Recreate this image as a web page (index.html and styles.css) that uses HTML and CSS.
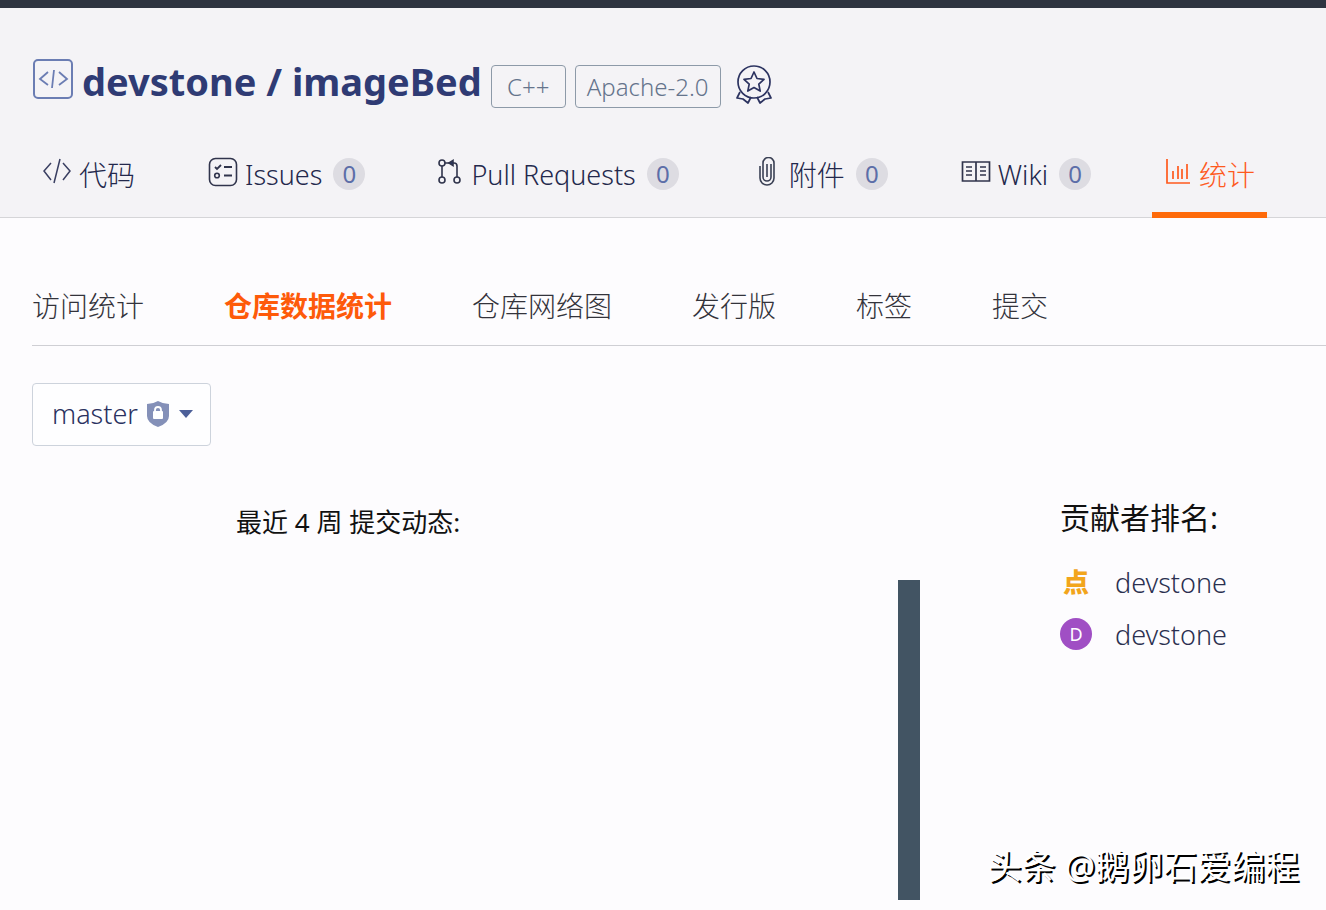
FILE: index.html
```html
<!DOCTYPE html>
<html lang="zh-CN">
<head>
    <meta charset="UTF-8">
    <meta name="viewport" content="width=device-width, initial-scale=1.0">
    <title>devstone / imageBed</title>
    <link rel="stylesheet" href="styles.css">
</head>
<body>
    <div class="topbar"></div>
    <header class="repo-header">
        <div class="repo-title">
            <svg class="repo-icon" width="42" height="42" viewBox="0 0 42 42" fill="none" stroke="#6b7db3">
                <rect x="2" y="2" width="38" height="38" rx="4" stroke-width="2"/>
                <path d="M16 14l-8 7 8 6M27 14l8 7-8 6M22 12l-2 18" stroke-width="1.800"/>
            </svg>
            <h1><a href="#">devstone</a> / <a href="#">imageBed</a></h1>
            <span class="label">C++</span>
            <span class="label">Apache-2.0</span>
            <svg class="medal" width="38" height="42" viewBox="0 0 38 42" fill="none" stroke="#2c3360" stroke-width="1.7" stroke-linejoin="round">
                <circle cx="19" cy="17" r="16"/>
                <path d="M19 7l3 6.500 7 .8-5.200 4.800 1.400 7L19 22.600 12.800 26.100l1.400-7L9 14.300l7-.8z"/>
                <path d="M5 27l-3 6 6 1 5 4 3-6M33 27l3 6-6 1-5 4-3-6"/>
            </svg>
        </div>
        <nav class="repo-nav">
            <a href="#">
                <svg width="30" height="28" viewBox="0 0 30 28" fill="none" stroke="#3a3f62" stroke-width="1.5">
                    <path d="M9 5l-7 8 7 9M21 5l7 8-7 9M18 1l-6 24"/>
                </svg>
                <span class="zh">代码</span>
            </a>
            <a href="#">
                <svg width="30" height="30" viewBox="0 0 30 30" fill="none" stroke="#30344c" stroke-width="1.6">
                    <rect x="1.500" y="1.500" width="27" height="27" rx="6"/>
                    <path d="M7 10l2 2 4-4M16 10h8M16 18.500h8" stroke-width="1.800"/>
                    <circle cx="9" cy="18.500" r="2.300"/>
                </svg>
                <span>Issues</span>
                <span class="count">0</span>
            </a>
            <a href="#">
                <svg width="26" height="28" viewBox="0 0 26 28" fill="none" stroke="#30344c" stroke-width="1.600">
                    <circle cx="4" cy="5" r="3"/>
                    <circle cx="4" cy="22" r="3"/>
                    <circle cx="19" cy="22" r="3"/>
                    <path d="M4 8v11M19 19V8q0-3-3-3H7"/>
                    <path d="M11 5l4-2.500v5z" fill="#26386e"/>
                </svg>
                <span>Pull Requests</span>
                <span class="count">0</span>
            </a>
            <a href="#">
                <svg width="30" height="30" viewBox="-4 0 30 30" fill="none" stroke="#3a4054" stroke-width="1.600">
                    <path d="M7 8v12a4 4 0 0 0 8 0V7M7 9V6a5 5 0 0 1 11 0v15a7 7 0 0 1-14 0V9M11 7v13"/>
                </svg>
                <span class="zh">附件</span>
                <span class="count">0</span>
            </a>
            <a href="#">
                <svg width="30" height="28" viewBox="0 0 30 28" fill="none" stroke="#30344c" stroke-width="1.700">
                    <path d="M1.500 4h27v19h-27zM15 4v19M5 9h6M5 13h6M5 17h6M19 9h6M19 13h6M19 17h6"/>
                </svg>
                <span>Wiki</span>
                <span class="count">0</span>
            </a>
            <a href="#" class="active">
                <svg width="28" height="28" viewBox="0 0 28 28" fill="none" stroke="#fe5a1e" stroke-width="1.700">
                    <path d="M3 1v24h23M9 21v-8M14 21V8M18 21V11M23 21V6"/>
                </svg>
                <span class="zh">统计</span>
            </a>
        </nav>
    </header>

    <main>
        <nav class="sub-nav">
            <a href="#">访问统计</a>
            <a href="#" class="active">仓库数据统计</a>
            <a href="#">仓库网络图</a>
            <a href="#">发行版</a>
            <a href="#">标签</a>
            <a href="#">提交</a>
        </nav>

        <button class="branch" type="button">
            <span>master</span>
            <svg width="24" height="28" viewBox="0 0 24 28">
                <path d="M12 1q5 3 11 3v12q0 7-11 11Q1 23 1 16V4q6 0 11-3z" fill="#8490b8"/>
                <rect x="7" y="11" width="10" height="8" rx="1" fill="#fff"/>
                <path d="M9 12v-2a3 3 0 0 1 6 0v2" fill="none" stroke="#fff" stroke-width="1.800"/>
            </svg>
            <svg width="16" height="10" viewBox="0 0 16 10"><path d="M1 1h14L8 9z" fill="#4c5f99"/></svg>
        </button>

        <div class="stats">
            <section class="commits">
                <h2>最近 4 周 提交动态:</h2>
                <div class="chart">
                    <div class="bar"></div>
                </div>
            </section>
            <aside class="contributors">
                <h2>贡献者排名:</h2>
                <ul>
                    <li><span class="avatar avatar-logo">点</span><a href="#">devstone</a></li>
                    <li><span class="avatar avatar-letter">D</span><a href="#">devstone</a></li>
                </ul>
            </aside>
        </div>
    </main>
    <div class="watermark">头条 @鹅卵石爱编程</div>
</body>
</html>
```

FILE: styles.css
```css
* {
    box-sizing: border-box;
}

body {
    margin: 0;
    position: relative;
    min-height: 100vh;
    background: #fdfcfe;
    color: #111;
    font-family: "Noto Sans", "Noto Sans CJK SC", sans-serif;
    font-size: 27px;
    font-weight: 300;
}

a {
    color: inherit;
    text-decoration: none;
}

svg {
    flex: none;
}

h1, h2, ul {
    margin: 0;
    padding: 0;
}

.topbar {
    height: 8px;
    background: #2e3440;
}

/* Repository header */
.repo-header {
    background: #f4f3f6;
    border-bottom: 1px solid #d5d5d8;
    padding: 44px 32px 0;
}

.repo-title {
    display: flex;
    align-items: center;
    gap: 9px;
    height: 68px;
    color: #2f3b74;
}

.repo-icon {
    margin-bottom: 14px;
}

.repo-title h1 {
    font-size: 38px;
    line-height: 52px;
    font-weight: 700;
    margin-bottom: 10px;
    margin-left: -1px;
    white-space: nowrap;
}

.label {
    min-width: 75px;
    height: 43px;
    padding: 0 11px;
    border: 1px solid #8d9aa8;
    border-radius: 4px;
    color: #65748c;
    font-size: 24px;
    line-height: 42px;
    text-align: center;
}

.medal {
    margin-left: 5px;
}

.repo-nav {
    display: flex;
    gap: 49px;
    margin-top: 12px;
    margin-bottom: -1px;
}

.repo-nav a {
    display: flex;
    align-items: center;
    height: 86px;
    padding: 4px 12px 0;
    border-bottom: 6px solid transparent;
    color: #23284c;
    white-space: nowrap;
}

.repo-nav a:first-child {
    margin-left: -2px;
}

.repo-nav svg {
    margin-right: 7px;
    margin-bottom: 4px;
}

.repo-nav .zh {
    font-size: 28px;
}

.repo-nav a.active {
    color: #fe5a1e;
    border-bottom-color: #fe6a0a;
}

.count {
    width: 32px;
    height: 32px;
    margin-left: 11px;
    border-radius: 50%;
    background: #dddce2;
    color: #5c6ea8;
    font-size: 24px;
    line-height: 32px;
    font-weight: 400;
    text-align: center;
}

/* Statistics tabs */
.sub-nav {
    display: flex;
    gap: 80px;
    margin-left: 32px;
    padding: 67px 0 18px;
    border-bottom: 1px solid #cfcfd4;
    color: #33333b;
    font-size: 28px;
    line-height: 42px;
    white-space: nowrap;
}

.sub-nav .active {
    color: #fe5a0a;
    font-weight: 700;
}

.branch {
    display: flex;
    align-items: center;
    gap: 8px;
    height: 63px;
    margin: 37px 0 0 32px;
    padding: 0 16px 2px 19px;
    border: 1px solid #cdd3dc;
    border-radius: 4px;
    background: #fefeff;
    color: #2a3160;
    font: inherit;
}

/* Commit chart and contributors */
.stats {
    display: flex;
    padding-top: 54px;
}

.commits {
    flex: 1;
}

.commits h2 {
    padding-left: 236px;
    font-size: 26px;
    line-height: 44px;
    font-weight: 400;
}

.chart {
    display: flex;
    justify-content: flex-end;
    align-items: flex-end;
    height: 356px;
    padding-right: 140px;
}

.bar {
    width: 22px;
    height: 320px;
    background: #425463;
}

.contributors {
    width: 266px;
}

.contributors h2 {
    font-size: 30px;
    line-height: 36px;
    font-weight: 400;
}

.contributors ul {
    margin-top: 20px;
    list-style: none;
}

.contributors li {
    display: flex;
    align-items: center;
    gap: 23px;
    height: 52px;
    color: #2b3050;
}

.avatar {
    width: 32px;
    height: 32px;
    line-height: 32px;
    text-align: center;
}

.avatar-logo {
    color: #f2a51c;
    font-size: 26px;
    font-weight: 900;
}

.avatar-letter {
    border-radius: 50%;
    background: #a04fc4;
    color: #fff;
    font-size: 18px;
    font-weight: 400;
}

.watermark {
    position: absolute;
    right: 27px;
    bottom: 20px;
    color: #fff;
    font-size: 34px;
    line-height: 48px;
    font-weight: 400;
    text-shadow: 2px 2px 0 #000;
}
```
